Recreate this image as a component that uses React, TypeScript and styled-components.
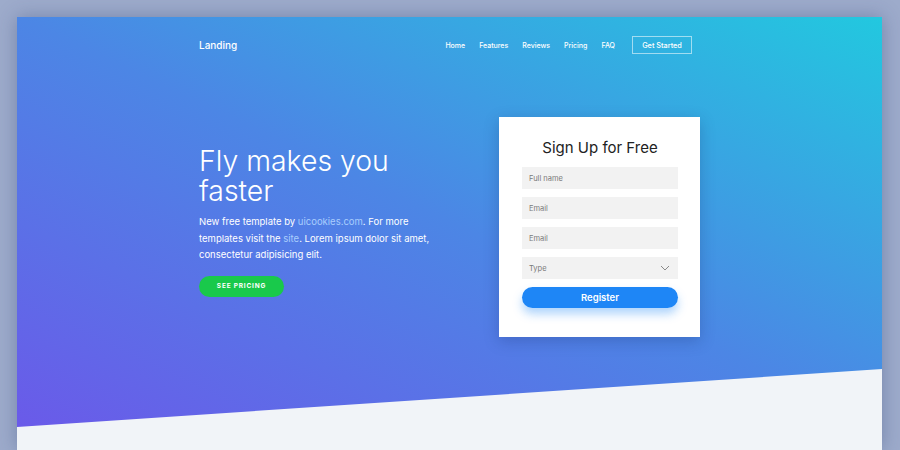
import React from 'react';
import styled, { createGlobalStyle } from 'styled-components';

const GlobalStyle = createGlobalStyle`
  html, body {
    margin: 0;
    padding: 0;
    height: 100%;
    overflow: hidden;
  }
  body {
    background: #9dabcb;
    font-family: Inter, "Open Sans", sans-serif;
  }
`;

const App: React.FC = () => {
  return (
    <>
      <GlobalStyle />
      <Stage>
        <Frame>
          <Hero>
            <Container>
              <Nav>
                <Brand>Landing</Brand>
                <NavLinks>
                  <NavLink>Home</NavLink>
                  <NavLink>Features</NavLink>
                  <NavLink>Reviews</NavLink>
                  <NavLink>Pricing</NavLink>
                  <NavLink>FAQ</NavLink>
                  <OutlineButton>Get Started</OutlineButton>
                </NavLinks>
              </Nav>
              <HeroRow>
                <Intro>
                  <Title>
                    Fly makes you
                    <br />
                    faster
                  </Title>
                  <Lead>
                    New free template by <LeadLink>uicookies.com</LeadLink>. For more templates
                    visit the <LeadLink>site</LeadLink>. Lorem ipsum dolor sit amet,
                    consectetur adipisicing elit.
                  </Lead>
                  <PillButton>SEE PRICING</PillButton>
                </Intro>
                <Card>
                  <CardTitle>Sign Up for Free</CardTitle>
                  <Field>Full name</Field>
                  <Field>Email</Field>
                  <Field>Email</Field>
                  <Field>
                    Type
                    <svg width="10" height="6" viewBox="0 0 10 6" fill="none">
                      <path d="M1 1l4 4 4-4" stroke="#8a8a8a" strokeWidth="1" />
                    </svg>
                  </Field>
                  <RegisterButton>Register</RegisterButton>
                </Card>
              </HeroRow>
            </Container>
          </Hero>
          <Lower />
        </Frame>
      </Stage>
    </>
  );
};

export default App;

const Stage = styled.div`
  padding: 17px 18px 0 17px;
  height: 450px;
  box-sizing: border-box;
  overflow: hidden;
`;

const Frame = styled.div`
  width: 865px;
  height: 433px;
  overflow: hidden;
  background: #f1f4f8;
  box-shadow: 0 0 18px rgba(40, 60, 110, 0.35);
`;

const Hero = styled.section`
  height: 410px;
  background: linear-gradient(to top right, #6a5ae9 0%, #4c86e5 50%, #22c8df 100%);
  clip-path: polygon(0 0, 100% 0, 100% 352px, 0 100%);
`;

const Container = styled.div`
  width: 501px;
  margin: 0 auto;
`;

const Nav = styled.nav`
  display: flex;
  align-items: center;
  justify-content: space-between;
  padding: 19px 8px 0 0;
  height: 18px;
`;

const Brand = styled.div`
  color: #fff;
  font-size: 10px;
  font-weight: 500;
`;

const NavLinks = styled.div`
  display: flex;
  align-items: center;
  gap: 14px;
`;

const NavLink = styled.a`
  color: #fff;
  font-size: 7px;
  font-weight: 500;
`;

const OutlineButton = styled.a`
  display: flex;
  align-items: center;
  justify-content: center;
  margin-left: 3px;
  width: 60px;
  height: 18px;
  box-sizing: border-box;
  border: 1px solid rgba(255, 255, 255, 0.55);
  color: #fff;
  font-size: 7.3px;
  font-weight: 500;
`;

const HeroRow = styled.div`
  display: flex;
  justify-content: space-between;
  margin-top: 63px;
`;

const Intro = styled.div`
  width: 240px;
  padding-top: 29px;
`;

const Title = styled.h1`
  margin: 0;
  color: #fff;
  font-size: 28.4px;
  line-height: 30px;
  font-weight: 300;
`;

const Lead = styled.p`
  margin: 8px 0 12px;
  color: #fff;
  font-size: 9.5px;
  line-height: 16.5px;
  font-weight: 400;
`;

const LeadLink = styled.span`
  color: #a9cdfd;
`;

const PillButton = styled.a`
  display: flex;
  align-items: center;
  justify-content: center;
  width: 85px;
  height: 21px;
  border-radius: 11px;
  background: #19c94b;
  color: #fff;
  font-size: 6.5px;
  font-weight: 700;
  letter-spacing: 0.8px;
`;

const Card = styled.div`
  width: 201px;
  height: 220px;
  box-sizing: border-box;
  padding: 21px 22px 0 23px;
  background: #fff;
  box-shadow: 0 4px 14px rgba(20, 40, 100, 0.25);
  display: flex;
  flex-direction: column;
  gap: 8px;
`;

const CardTitle = styled.div`
  text-align: center;
  color: #222;
  font-size: 15px;
  line-height: 20px;
  margin-bottom: 1px;
`;

const Field = styled.div`
  height: 22px;
  display: flex;
  align-items: center;
  justify-content: space-between;
  padding: 0 8px 0 7px;
  background: #f2f2f2;
  color: #7a7a7a;
  font-size: 7.5px;
`;

const RegisterButton = styled.div`
  height: 21px;
  display: flex;
  align-items: center;
  justify-content: center;
  border-radius: 11px;
  background: #1e86f6;
  color: #fff;
  font-size: 9.5px;
  font-weight: 600;
  box-shadow: 0 6px 10px rgba(30, 134, 246, 0.35);
`;

const Lower = styled.section`
  height: 23px;
  background: #f1f4f8;
`;
